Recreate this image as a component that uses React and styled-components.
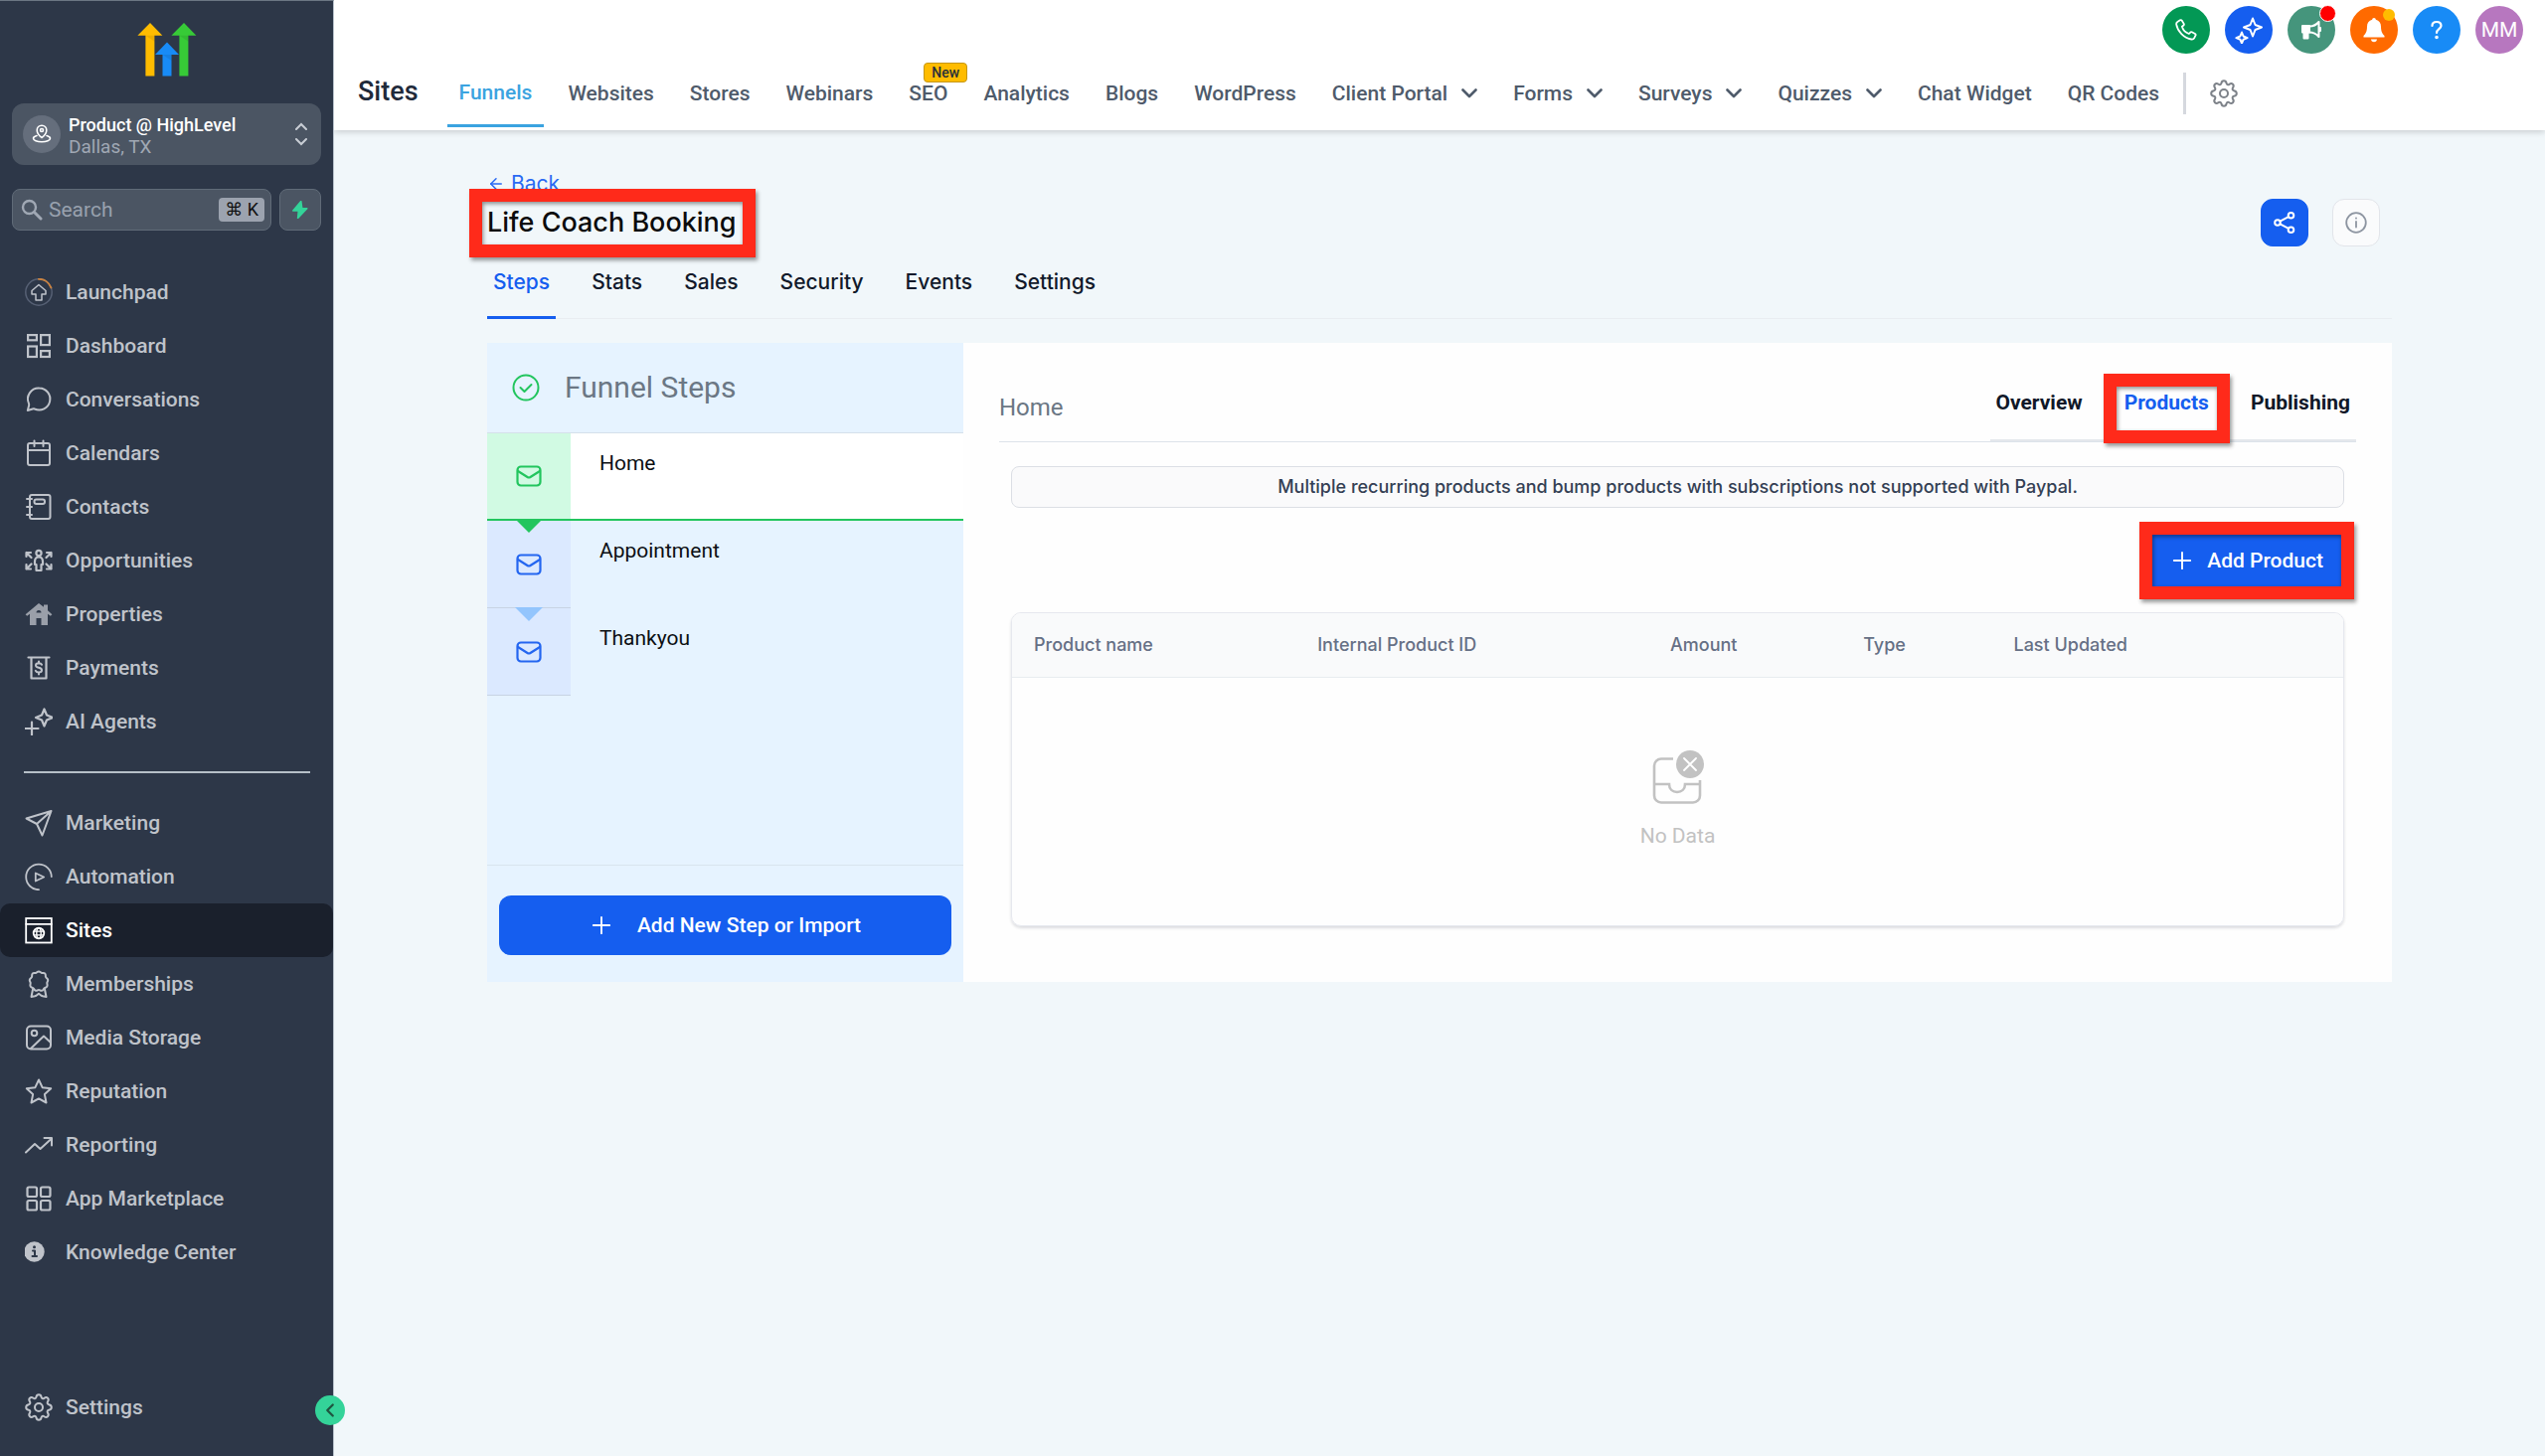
import React from 'react'
import styled, { createGlobalStyle, css } from 'styled-components'
import { ChevronLeft, Plus, ArrowLeft } from 'lucide-react'

const colors = {
  sidebar: '#2d3748',
  sidebarActive: '#1a202c',
  sidebarField: '#4b5563',
  page: '#f1f7fa',
  primary: '#155eef',
  sky: '#3ba3e0',
  green: '#22c55e',
  red: '#ff2a1a',
  grey: '#6b7784',
  line: '#e4e7ec',
}

const roboto = "Roboto, 'DejaVu Sans', sans-serif"
const inter = 'Inter, sans-serif'

const GlobalStyle = createGlobalStyle`
  *, *::before, *::after {
    box-sizing: border-box;
  }
  body {
    margin: 0;
    background: ${colors.page};
    font-family: ${roboto};
    font-size: 21px;
    line-height: 24px;
  }
  button, input {
    font: inherit;
    margin: 0;
    padding: 0;
    border: 0;
    background: none;
    color: inherit;
  }
  button {
    cursor: pointer;
  }
  a {
    color: inherit;
    text-decoration: none;
  }
  h1, h2, h3, p, ul {
    margin: 0;
    padding: 0;
    list-style: none;
  }
  svg {
    display: block;
    flex: none;
  }
`

/* icons */

const Svg = ({ size = 28, width = 1.5, box = 28, children, ...rest }) => (
  <svg
    width={size}
    height={size}
    viewBox={`0 0 ${box} ${box}`}
    fill='none'
    stroke='currentColor'
    strokeWidth={width}
    strokeLinecap='round'
    strokeLinejoin='round'
    aria-hidden='true'
    {...rest}
  >
    {children}
  </svg>
)

const GEAR = 'M14 1.2c1.5 0 2.3 1 2.6 2.5.3 1.4 1.6 1.9 2.8 1.1 1.3-.9 2.6-1 3.6 0s.9 2.3 0 3.6c-.8 1.2-.3 2.5 1.1 2.8 1.5.3 2.7 1.2 2.7 2.8s-1.2 2.5-2.7 2.8c-1.4.3-1.9 1.6-1.1 2.8.9 1.3 1 2.6 0 3.6s-2.3.9-3.6 0c-1.2-.8-2.5-.3-2.8 1.1-.3 1.5-1.1 2.5-2.6 2.5s-2.3-1-2.6-2.5c-.3-1.4-1.6-1.9-2.8-1.1-1.3.9-2.6 1-3.6 0s-.9-2.3 0-3.6c.8-1.2.3-2.5-1.1-2.8C2.4 16.5 1.2 15.6 1.2 14s1.2-2.5 2.7-2.8c1.4-.3 1.9-1.6 1.1-2.8-.9-1.3-1-2.6 0-3.6s2.3-.9 3.6 0c1.2.8 2.5.3 2.8-1.1C11.7 2.2 12.5 1.2 14 1.2z'

const GearIcon = () => (
  <Svg width={2}>
    <path d={GEAR} />
    <circle cx='14' cy='14' r='4' />
  </Svg>
)

const LaunchpadIcon = () => (
  <Svg>
    <circle cx='14' cy='14' r='13.2' stroke='#566074' />
    <path d='M14 .8a13.2 13.2 0 0 1 12.4 8.7' stroke='#c98240' strokeWidth='2' />
    <path d='M14 6.5 7 12.5v3.5h4v6h6v-6h4v-3.5z' />
  </Svg>
)

const DashboardIcon = () => (
  <Svg width={2.2} strokeLinecap='butt' strokeLinejoin='miter'>
    <rect x='3.1' y='3.1' width='8.8' height='5.2' />
    <rect x='16.1' y='3.1' width='8.8' height='10' />
    <rect x='3.1' y='14.5' width='8.8' height='10.5' />
    <rect x='16.1' y='19.1' width='8.8' height='5.9' />
  </Svg>
)

const ChatIcon = () => (
  <Svg width={2}>
    <path d='M14.5 2.5a11 11 0 1 1-4.7 21c-.6-.3-1.2-.2-2 0L2.8 25l1.3-5c.2-.7.1-1.3-.1-1.9A11 11 0 0 1 14.5 2.5z' />
  </Svg>
)

const CalendarIcon = () => (
  <Svg width={2}>
    <rect x='3' y='4' width='22' height='22' rx='2' />
    <path d='M3 11h22M9.5 1.5V7M18.5 1.5V7' />
  </Svg>
)

const ContactsIcon = () => (
  <Svg width={2}>
    <rect x='5' y='2' width='20.5' height='24' rx='2' />
    <rect x='9.5' y='6.5' width='10.5' height='4.5' rx='2' />
    <path d='M2 6h5M2 14h5M2 22h5' />
  </Svg>
)

const OpportunitiesIcon = () => (
  <Svg width={2.2}>
    <circle cx='14' cy='6.5' r='2.6' />
    <path d='M14 10.5c-3 0-4 2-4 4.5v3h1.5v6h5v-6H18v-3c0-2.5-1-4.5-4-4.5z' />
    <path d='M1.5 10V6H6M1.5 6l5 5M26.5 10V6H22m4.5 0-5 5M1.5 18v4.5H6m-4.5 0 5-5M26.5 18v4.5H22m4.5 0-5-5' />
  </Svg>
)

const PropertiesIcon = () => (
  <Svg>
    <path
      fill='currentColor'
      stroke='none'
      opacity='.75'
      d='M14 3 .6 14.2l1.6 1.6L5 13.8V25h6.500v-7h5v7H23V13.8l2.8 2 1.6-1.6L23 10.2V4.5h-4v2.3zm-2.5 9.5a2.5 2.5 0 0 1 5 0z'
    />
  </Svg>
)

const PaymentsIcon = () => (
  <Svg width={2.2}>
    <path d='M3.5 3.5h21M6.5 3.5v21h15v-21' />
    <path d='M17 10.8c-.5-1-1.5-1.5-3-1.5-1.8 0-3 .8-3 2.2 0 3 6 1.5 6 4.7 0 1.5-1.2 2.3-3 2.3-1.6 0-2.7-.6-3.2-1.7M14 7.5v2M14 18.5v2' strokeWidth='2' />
  </Svg>
)

const AgentsIcon = () => (
  <Svg width={2.2}>
    <path d='M19.5 1.5 22 7.5l6 2.5-6 2.5-2.5 6-2.5-6-6-2.500 6-2.5zM7 14.5v13M.5 21h13' />
  </Svg>
)

const SendIcon = () => (
  <Svg width={2}>
    <path d='M26.5 2 1.5 9.5 12 15l5.5 11.5zM26.5 2 12 15' />
  </Svg>
)

const AutomationIcon = () => (
  <Svg width={1.8}>
    <path d='M26.8 14A12.8 12.8 0 1 0 14 27.2' />
    <path d='M10.8 10.5v8l8.4-4z' />
  </Svg>
)

const SitesIcon = () => (
  <Svg width={1.8} strokeLinejoin='miter'>
    <rect x='1.2' y='2' width='25.6' height='24.5' />
    <path d='M1.2 7.8h25.6' />
    <circle cx='14' cy='17' r='5.3' />
    <ellipse cx='14' cy='17' rx='2.2' ry='5.3' strokeWidth='1.4' />
    <path d='M9.5 15.2h9M9.5 18.8h9' strokeWidth='1.2' />
  </Svg>
)

const BadgeIcon = () => (
  <Svg width={2}>
    <path d='M14 1.5c1.5 0 1.8 1.2 3 1.5s2.3-.4 3.3.7.3 2.1.7 3.3 1.9 1.4 2.2 2.9-.9 2-.9 3.2.8 2.2 0 3.5-2 1-2.9 1.9-1 2-2.4 2.3-1.9-.8-3-.8-1.7 1.1-3 .8-1.5-1.4-2.4-2.3-2.1-.6-2.9-1.9 0-2.3 0-3.5-1.2-1.8-.9-3.2S6.6 8.2 7 7s-.3-2.2.7-3.3 2.1-.4 3.3-.7 1.5-1.5 3-1.5z' />
    <path d='M8 19.5 6.5 27l3.5-.8 1.5-.5 2.5-2 2.5 2 1.5.5 3.5.8-1.5-7.5' />
  </Svg>
)

const ImageIcon = () => (
  <Svg width={2}>
    <rect x='2' y='2.5' width='24' height='23' rx='4' />
    <circle cx='9.5' cy='9.5' r='2.8' />
    <path d='M6 25 19 12.5l7 6.5' />
  </Svg>
)

const StarIcon = () => (
  <Svg width={2}>
    <path d='m14 2.5 3.6 7.7 8.6 1.1-6.3 5.8 1.6 8.4L14 21.4l-7.5 4.1 1.6-8.4-6.3-5.8 8.6-1.1z' />
  </Svg>
)

const TrendIcon = () => (
  <Svg width={2}>
    <path d='m1 21.5 9-8.5 5.5 5L27 7.5M19.5 7H27v7.5' />
  </Svg>
)

const GridIcon = () => (
  <Svg width={2.2}>
    <rect x='2.5' y='2.5' width='9.5' height='9.5' rx='1.5' />
    <rect x='16' y='2.5' width='9.5' height='9.5' rx='1.5' />
    <rect x='2.5' y='16' width='9.5' height='9.5' rx='1.5' />
    <rect x='16' y='16' width='9.5' height='9.5' rx='1.5' />
  </Svg>
)

const KnowledgeIcon = () => (
  <Svg>
    <circle cx='9.5' cy='13.5' r='10.2' fill='currentColor' stroke='none' />
    <path d='M8 12.5h2V18M7.5 18H12' stroke={colors.sidebar} strokeWidth='2' />
    <circle cx='9.500' cy='8.8' r='1.5' fill={colors.sidebar} stroke='none' />
  </Svg>
)

const LogoIcon = () => (
  <svg width='60' height='54' viewBox='0 0 60 54' aria-hidden='true'>
    <path fill='#ffbc00' d='M13 0 .4 12.8h8v40.7h9V12.8h8z' />
    <path fill='#37ca37' d='M47 0 34.4 12.8h8v40.7h9V12.8h8z' />
    <path fill='#188bf6' d='M30 19.5 18 32h7.5v21.5h9V32H42z' />
    <path fill='#000' opacity='.08' d='M8.4 12.8h9v6zM25.5 32h9v6zM42.4 12.8h9v6z' />
  </svg>
)

const LocationIcon = () => (
  <Svg size={20} box={20} width={1.6}>
    <path d='M10 13.5s-4.8-3.4-4.8-7.500a4.8 4.8 0 0 1 9.6 0c0 4.1-4.8 7.5-4.8 7.5z' />
    <circle cx='10' cy='6' r='1.5' />
    <path d='M5 11.5c-2.2.6-3.5 1.5-3.5 2.7 0 2 3.8 3.5 8.5 3.5s8.5-1.5 8.5-3.5c0-1.2-1.3-2.1-3.5-2.7' />
  </Svg>
)

const SearchIcon = () => (
  <Svg size={22} box={22} width={2.4}>
    <circle cx='8.5' cy='8.5' r='6.5' />
    <path d='m14 14 6 6' strokeWidth='3' />
  </Svg>
)

const BoltIcon = () => (
  <Svg size={18} box={18}>
    <path d='M9.8.6 1.8 10h5.5l-.7 7.4 9.200-9.600h-5z' fill='#34d399' stroke='#34d399' />
  </Svg>
)

const PhoneIcon = () => (
  <Svg size={22} box={22} width={1.8}>
    <path d='M2.6 2.8 5 1.3c.7-.4 1.4-.1 1.8.5l1.9 3.1c.3.6.2 1.2-.3 1.6L6.9 7.7c.9 3.1 3.9 6.2 7 7.3l1.3-1.4c.4-.5 1-.6 1.6-.3l3.2 1.7c.6.4.8 1.1.5 1.7l-1.3 2.5c-.6 1-1.7 1.5-2.9 1.3C8.7 19.300 2.3 12.3 1.2 5.7c-.2-1.2.3-2.3 1.4-2.9z' />
  </Svg>
)

const SparklesIcon = () => (
  <Svg width={2}>
    <path d='M18 2.5 20.5 9l6.500 2.5-6.5 2.5-2.5 6.5-2.5-6.5L9 11.5 15.5 9zM7 16.5l1.6 4 4 1.6-4 1.6L7 27.5l-1.6-3.8-4-1.6 4-1.6z' />
  </Svg>
)

const MegaphoneIcon = () => (
  <Svg size={22} box={22} width={2}>
    <path d='M2 7h7v6.5H2z' fill='currentColor' />
    <path d='M3.5 13.5v6h4v-6' fill='currentColor' />
    <path d='M9 7.5c4 0 7-1.5 9.5-4.5v15C16 15 13 13.5 9 13.5M20 9v3' />
  </Svg>
)

const BellIcon = () => (
  <Svg size={26} box={26}>
    <path
      d='M13 1c-1 0-1.8.8-1.8 1.8C7.8 3.6 6 6.3 6 9.8 6 15 4.5 17 2.5 19v1.5h21V19C21.5 17 20 15 20 9.8c0-3.5-1.8-6.2-5.2-7C14.8 1.8 14 1 13 1zM10 22.5h6c0 1.6-1.3 2.7-3 2.7s-3-1.1-3-2.7z'
      fill='currentColor'
      stroke='none'
    />
  </Svg>
)

const HelpIcon = () => (
  <Svg size={20} box={20} width={2.2}>
    <path d='M5.5 6C5.5 3.5 7.5 2 10 2s4.5 1.5 4.5 4c0 3-4.5 3.5-4.5 7' />
    <circle cx='10' cy='17.5' r='.7' fill='currentColor' />
  </Svg>
)

const ShareIcon = () => (
  <Svg size={22} box={22} width={2}>
    <circle cx='17.5' cy='3.8' r='2.8' />
    <circle cx='4' cy='11' r='2.8' />
    <circle cx='17.5' cy='18.2' r='2.8' />
    <path d='m6.5 9.7 8.5-4.5M6.5 12.3l8.5 4.500' />
  </Svg>
)

const InfoIcon = () => (
  <Svg size={22} box={22} width={1.8}>
    <circle cx='11' cy='11' r='9.8' />
    <path d='M11 10v5.5M11 6.5v.2' />
  </Svg>
)

const CheckIcon = () => (
  <Svg width={2}>
    <circle cx='14' cy='14' r='12.5' />
    <path d='m8.5 14 4 4 7-7' />
  </Svg>
)

const MailIcon = () => (
  <Svg size={26} box={26} width={2.2}>
    <rect x='1.5' y='3.5' width='23' height='19' rx='3.5' />
    <path d='m2 8 9.5 6c1 .6 2 .6 3 0L24 8' />
  </Svg>
)

const Caret = ({ up }) => (
  <svg width='12' height='8' viewBox='0 0 12 8' fill='none' stroke='currentColor' strokeWidth='2' aria-hidden='true'>
    <path d={up ? 'm1 7 5-5 5 5' : 'm1 1 5 5 5-5'} strokeLinecap='round' />
  </svg>
)

const MenuCaret = () => (
  <Svg size={16} box={16} width={2.6}>
    <path d='m1.5 4.5 6.5 6.5 6.5-6.5' />
  </Svg>
)

const EmptyIcon = () => (
  <svg width='52' height='54' viewBox='0 0 52 54' fill='none' stroke='#c2c2c2' strokeWidth='2.6' aria-hidden='true'>
    <path d='M21 8.5H9a7 7 0 0 0-7 7v30a7 7 0 0 0 7 7h32a7 7 0 0 0 7-7V30M2 34h15c0 5 3.5 8 8 8s8-3 8-8h15' />
    <circle cx='38' cy='14' r='14' fill='#c2c2c2' stroke='none' />
    <path d='m32 8 12 12M44 8 32 20' stroke='#fff' strokeWidth='1.8' strokeLinecap='round' />
  </svg>
)

/* shared */

// call-out frame drawn over the wrapped element
const Marked = styled.div`
  position: relative;
  display: inline-flex;
  &::after {
    content: '';
    position: absolute;
    inset: ${p => p.$inset};
    border: 13px solid ${colors.red};
    box-shadow: 2px 3px 4px rgba(0, 0, 0, 0.4), inset 1px 2px 4px rgba(0, 0, 0, 0.45);
    pointer-events: none;
  }
`

const Shell = styled.div`
  display: flex;
  min-height: 100vh;
`

/* sidebar */

const Sidebar = styled.aside`
  position: relative;
  display: flex;
  flex-direction: column;
  flex: none;
  width: 336px;
  padding: 22px 0;
  background: ${colors.sidebar};
  border-top: 1px solid #6b7683;
  border-right: 1px solid #b8c2cc;
`

const Logo = styled.a`
  align-self: center;
  margin-bottom: 27px;
`

const Account = styled.button`
  display: flex;
  align-items: center;
  gap: 8px;
  height: 62px;
  margin: 0 12px 24px;
  padding: 0 14px 0 11px;
  border-radius: 12px;
  background: ${colors.sidebarField};
  color: #fff;
  text-align: left;
`

const AccountAvatar = styled.span`
  display: grid;
  place-items: center;
  width: 38px;
  height: 38px;
  border-radius: 50%;
  background: #656e7c;
`

const AccountText = styled.span`
  display: flex;
  flex: 1;
  flex-direction: column;
  padding-top: 4px;
  font-size: 18px;
  font-weight: 500;
  line-height: 22px;
  small {
    color: #a0a8b4;
    font-size: 19px;
    font-weight: 400;
  }
`

const Arrows = styled.span`
  display: flex;
  flex-direction: column;
  gap: 8px;
  color: #c8cdd4;
`

const SearchRow = styled.div`
  display: flex;
  gap: 8px;
  margin: 0 12px 35px;
`

const fieldBox = css`
  height: 42px;
  border: 1px solid #606b78;
  border-radius: 8px;
  background: ${colors.sidebarField};
`

const SearchBox = styled.label`
  ${fieldBox}
  display: flex;
  flex: 1;
  align-items: center;
  gap: 6px;
  min-width: 0;
  padding: 0 6px 0 8px;
  color: #a0a8b4;
  input {
    flex: 1;
    min-width: 0;
    outline: none;
    &::placeholder {
      color: #98a1ae;
      opacity: 1;
    }
  }
  kbd {
    padding: 0 6px;
    border-radius: 4px;
    background: #9ca3af;
    color: #111;
    font-family: ${roboto};
    font-size: 18px;
    line-height: 24px;
  }
`

const BoltButton = styled.button`
  ${fieldBox}
  display: grid;
  place-items: center;
  width: 42px;
`

const NavLink = styled.a`
  display: flex;
  align-items: center;
  gap: 13px;
  height: 54px;
  padding-left: 25px;
  border-radius: 10px;
  background: ${p => (p.$active ? colors.sidebarActive : 'transparent')};
  color: ${p => (p.$active ? '#fff' : '#bfc3ca')};
  font-weight: 500;
`

const Separator = styled.hr`
  width: 288px;
  height: 2px;
  margin: 23px 0 23px 24px;
  border: 0;
  background: #b6bfc8;
`

const SidebarFooter = styled.div`
  margin-top: auto;
`

const Collapse = styled.button`
  position: absolute;
  right: -12px;
  bottom: 31px;
  display: grid;
  place-items: center;
  width: 30px;
  height: 30px;
  border-radius: 50%;
  background: #34d399;
  color: #1f5540;
`

/* header */

const Content = styled.div`
  flex: 1;
  min-width: 0;
`

const Header = styled.header`
  height: 131px;
  background: #fff;
  box-shadow: 0 2px 6px rgba(0, 0, 0, 0.16);
`

const Actions = styled.div`
  display: flex;
  justify-content: flex-end;
  gap: 15px;
  padding: 6px 22px;
`

const Round = styled.button`
  position: relative;
  display: grid;
  place-items: center;
  width: 48px;
  height: 48px;
  border-radius: 50%;
  background: ${p => p.$bg};
  color: #fff;
`

const Dot = styled.i`
  position: absolute;
  top: ${p => (p.$ring ? '-1px' : '3px')};
  right: ${p => (p.$ring ? '-1px' : '3px')};
  width: ${p => (p.$ring ? '17px' : '12px')};
  height: ${p => (p.$ring ? '17px' : '12px')};
  border: ${p => (p.$ring ? '1px solid #fff' : '0')};
  border-radius: 50%;
  background: ${p => p.$bg};
`

const TopNav = styled.nav`
  display: flex;
  align-items: center;
  gap: 12px;
  height: 68px;
  padding-left: 24px;
`

const Section = styled.h1`
  margin-right: 17px;
  padding-bottom: 4px;
  color: #1f2a3a;
  font-size: 27px;
  font-weight: 500;
  line-height: 32px;
`

const TopLink = styled.a`
  position: relative;
  display: flex;
  align-items: center;
  gap: 14px;
  height: 68px;
  padding: 0 12px;
  border-bottom: ${p => (p.$active ? `3px solid ${colors.sky}` : '0')};
  color: ${p => (p.$active ? colors.sky : '#4f5b6b')};
  font-weight: 500;
  white-space: nowrap;
`

const NewTag = styled.span`
  position: absolute;
  top: 3px;
  left: 27px;
  padding: 0 7px;
  border: 1px solid #c69712;
  border-radius: 4px;
  background: #ffbc00;
  color: #26303b;
  font-size: 14px;
  line-height: 18px;
`

const Divider = styled.span`
  width: 3px;
  height: 42px;
  margin-right: 12px;
  background: #d5d8de;
`

const GearButton = styled.button`
  color: #7d8289;
`

/* funnel page */

const Page = styled.main`
  padding: 41px 154px;
`

const Back = styled.a`
  display: flex;
  align-items: center;
  gap: 6px;
  width: fit-content;
  height: 24px;
  padding-top: 2px;
  color: #2a6af3;
  font-family: ${inter};
`

const TitleRow = styled.div`
  display: flex;
  align-items: center;
  justify-content: space-between;
  height: 56px;
  padding-right: 12px;
`

const Title = styled.h2`
  color: #0b0b0c;
  font-family: ${inter};
  font-size: 27px;
  font-weight: 500;
  line-height: 36px;
`

const Tools = styled.div`
  display: flex;
  gap: 24px;
`

const Tool = styled.button`
  display: grid;
  place-items: center;
  width: 48px;
  height: 48px;
  border: 1px solid ${p => (p.$primary ? colors.primary : '#e2e5ea')};
  border-radius: 12px;
  background: ${p => (p.$primary ? colors.primary : '#fafbfc')};
  color: ${p => (p.$primary ? '#fff' : '#8d95a1')};
`

const Tabs = styled.nav`
  display: flex;
  gap: 30px;
  border-bottom: 1px solid #e9edf1;
`

const Tab = styled.a`
  margin-bottom: -1px;
  padding: 20px 6px 22px;
  border-bottom: 3px solid ${p => (p.$active ? colors.primary : 'transparent')};
  color: ${p => (p.$active ? colors.primary : '#111a2b')};
  font-family: ${inter};
  font-weight: 500;
`

const Board = styled.div`
  display: grid;
  grid-template-columns: 1fr 3fr;
  min-height: 643px;
  margin-top: 24px;
`

const Steps = styled.section`
  display: flex;
  flex-direction: column;
  background: #e6f3ff;
`

const StepsHead = styled.div`
  display: flex;
  align-items: center;
  gap: 25px;
  height: 91px;
  padding-left: 25px;
  border-bottom: 1px solid #d5e0ea;
  color: ${colors.green};
  h3 {
    color: ${colors.grey};
    font-size: 30px;
    font-weight: 400;
    line-height: 36px;
  }
`

const StepRow = styled.li`
  display: flex;
  height: 88px;
  background: ${p => (p.$active ? '#fff' : 'transparent')};
  border-bottom: ${p => (p.$active ? `2px solid ${colors.green}` : '0')};
`

const StepIcon = styled.span`
  position: relative;
  display: grid;
  place-items: center;
  width: 84px;
  background: ${p => (p.$active ? '#d1fae3' : '#dbe9ff')};
  border-bottom: ${p => (p.$active ? '0' : '1px solid #c7d3e3')};
  color: ${p => (p.$active ? colors.green : '#2466f0')};
`

const Pointer = styled.i`
  position: absolute;
  top: 100%;
  left: 50%;
  z-index: 1;
  margin-left: -14px;
  border: 14px solid transparent;
  border-top-color: ${p => (p.$active ? colors.green : '#93c5fd')};
  border-bottom: 0;
`

const StepName = styled.a`
  padding: 18px 29px;
  color: #0c0f13;
`

const StepsFoot = styled.div`
  margin-top: auto;
  padding: 30px 12px 27px;
  border-top: 1px solid #d9e4ee;
`

const PrimaryButton = styled.button`
  display: flex;
  align-items: center;
  justify-content: center;
  gap: ${p => (p.$wide ? '22px' : '11px')};
  width: ${p => (p.$wide ? '100%' : 'auto')};
  height: ${p => (p.$wide ? '60px' : '52px')};
  padding: 0 18px 0 16px;
  border-radius: ${p => (p.$wide ? '12px' : '0')};
  background: ${colors.primary};
  color: #fff;
  font-weight: 500;
`

const Detail = styled.section`
  padding: 0 36px;
  background: #fefefe;
`

const DetailHead = styled.div`
  display: flex;
  align-items: flex-end;
  justify-content: space-between;
  height: 100px;
  border-bottom: 1px solid #dde3ea;
  h3 {
    padding-bottom: 20px;
    color: ${colors.grey};
    font-size: 24px;
    font-weight: 400;
    line-height: 28px;
  }
`

const DetailTabs = styled.nav`
  display: flex;
  gap: 42px;
  padding: 0 6px 25px;
  border-bottom: 2px solid ${colors.line};
  color: #101828;
  font-weight: 700;
`

const DetailTab = styled.a`
  color: ${p => (p.$active ? colors.primary : 'inherit')};
`

const Products = styled.div`
  display: flex;
  flex-direction: column;
  padding: 24px 12px 0;
`

const Notice = styled.p`
  padding: 8px 16px;
  border: 1px solid #dcdfe5;
  border-radius: 8px;
  background: #fafafb;
  color: #344054;
  font-family: ${inter};
  font-size: 18px;
  font-weight: 500;
  text-align: center;
`

const Toolbar = styled.div`
  display: flex;
  justify-content: flex-end;
  padding: 27px 3px 26px;
`

const TableCard = styled.div`
  overflow: hidden;
  border: 1px solid #e6e8ee;
  border-radius: 10px;
  box-shadow: 0 2px 3px rgba(16, 24, 40, 0.14);
`

const Table = styled.table`
  width: 100%;
  border-collapse: collapse;
  table-layout: fixed;
  th {
    height: 64px;
    padding: 0 0 0 22px;
    border-bottom: 1px solid #e8ecf0;
    background: #f9fafb;
    color: #667085;
    font-family: ${inter};
    font-size: 18px;
    font-weight: 500;
    text-align: left;
  }
  td {
    height: 250px;
    padding: 0 0 4px;
  }
`

const Empty = styled.div`
  display: flex;
  flex-direction: column;
  align-items: center;
  gap: 20px;
  color: #c2c2c2;
`

const mainLinks = [
  ['Launchpad', LaunchpadIcon],
  ['Dashboard', DashboardIcon],
  ['Conversations', ChatIcon],
  ['Calendars', CalendarIcon],
  ['Contacts', ContactsIcon],
  ['Opportunities', OpportunitiesIcon],
  ['Properties', PropertiesIcon],
  ['Payments', PaymentsIcon],
  ['AI Agents', AgentsIcon],
]

const moreLinks = [
  ['Marketing', SendIcon],
  ['Automation', AutomationIcon],
  ['Sites', SitesIcon],
  ['Memberships', BadgeIcon],
  ['Media Storage', ImageIcon],
  ['Reputation', StarIcon],
  ['Reporting', TrendIcon],
  ['App Marketplace', GridIcon],
  ['Knowledge Center', KnowledgeIcon],
]

const topLinks = [
  { label: 'Funnels' },
  { label: 'Websites' },
  { label: 'Stores' },
  { label: 'Webinars' },
  { label: 'SEO', isNew: true },
  { label: 'Analytics' },
  { label: 'Blogs' },
  { label: 'WordPress' },
  { label: 'Client Portal', menu: true },
  { label: 'Forms', menu: true },
  { label: 'Surveys', menu: true },
  { label: 'Quizzes', menu: true },
  { label: 'Chat Widget' },
  { label: 'QR Codes' },
]

const columns = [
  ['Product name', '21.3%'],
  ['Internal Product ID', '26.5%'],
  ['Amount', '14.5%'],
  ['Type', '11.3%'],
  ['Last Updated', 'auto'],
]

const SideLink = ({ label, icon: Icon, active }) => (
  <NavLink href='#' $active={active}>
    <Icon />
    {label}
  </NavLink>
)

const SideMenu = () => (
  <Sidebar>
    <Logo href='#' aria-label='HighLevel'>
      <LogoIcon />
    </Logo>
    <Account>
      <AccountAvatar><LocationIcon /></AccountAvatar>
      <AccountText>
        Product @ HighLevel
        <small>Dallas, TX</small>
      </AccountText>
      <Arrows>
        <Caret up />
        <Caret />
      </Arrows>
    </Account>
    <SearchRow>
      <SearchBox>
        <SearchIcon />
        <input type='text' placeholder='Search' aria-label='Search' />
        <kbd>⌘ K</kbd>
      </SearchBox>
      <BoltButton aria-label='Quick actions'><BoltIcon /></BoltButton>
    </SearchRow>
    <nav>
      {mainLinks.map(([label, icon]) => <SideLink key={label} label={label} icon={icon} />)}
      <Separator />
      {moreLinks.map(([label, icon]) => (
        <SideLink key={label} label={label} icon={icon} active={label === 'Sites'} />
      ))}
    </nav>
    <SidebarFooter>
      <SideLink label='Settings' icon={GearIcon} />
    </SidebarFooter>
    <Collapse aria-label='Collapse sidebar'><ChevronLeft size={22} strokeWidth={2.5} /></Collapse>
  </Sidebar>
)

const TopBar = () => (
  <Header>
    <Actions>
      <Round $bg='#039855' aria-label='Call'><PhoneIcon /></Round>
      <Round $bg='#155eef' aria-label='Assistant'><SparklesIcon /></Round>
      <Round $bg='#45957c' aria-label='Announcements'>
        <MegaphoneIcon />
        <Dot $bg='#ff0000' $ring />
      </Round>
      <Round $bg='#ff6a00' aria-label='Notifications'>
        <BellIcon />
        <Dot $bg='#ffbc00' />
      </Round>
      <Round $bg='#188bf6' aria-label='Help'><HelpIcon /></Round>
      <Round $bg='#b777bf'>MM</Round>
    </Actions>
    <TopNav>
      <Section>Sites</Section>
      {topLinks.map(({ label, menu, isNew }) => (
        <TopLink key={label} href='#' $active={label === 'Funnels'}>
          {label}
          {menu && <MenuCaret />}
          {isNew && <NewTag>New</NewTag>}
        </TopLink>
      ))}
      <Divider />
      <GearButton aria-label='Site settings'><GearIcon /></GearButton>
    </TopNav>
  </Header>
)

const FunnelSteps = () => (
  <Steps>
    <StepsHead>
      <CheckIcon />
      <h3>Funnel Steps</h3>
    </StepsHead>
    <ul>
      {['Home', 'Appointment', 'Thankyou'].map((name, i) => (
        <StepRow key={name} $active={i === 0}>
          <StepIcon $active={i === 0}>
            <MailIcon />
            {i < 2 && <Pointer $active={i === 0} />}
          </StepIcon>
          <StepName href='#'>{name}</StepName>
        </StepRow>
      ))}
    </ul>
    <StepsFoot>
      <PrimaryButton $wide>
        <Plus size={28} strokeWidth={1.6} />
        Add New Step or Import
      </PrimaryButton>
    </StepsFoot>
  </Steps>
)

const StepDetail = () => (
  <Detail>
    <DetailHead>
      <h3>Home</h3>
      <DetailTabs>
        <DetailTab href='#'>Overview</DetailTab>
        <Marked $inset='-17px -21px -29px'>
          <DetailTab href='#' $active>Products</DetailTab>
        </Marked>
        <DetailTab href='#'>Publishing</DetailTab>
      </DetailTabs>
    </DetailHead>
    <Products>
      <Notice>Multiple recurring products and bump products with subscriptions not supported with Paypal.</Notice>
      <Toolbar>
        <Marked $inset='-13px'>
          <PrimaryButton>
            <Plus size={28} strokeWidth={1.6} />
            Add Product
          </PrimaryButton>
        </Marked>
      </Toolbar>
      <TableCard>
        <Table>
          <colgroup>
            {columns.map(([label, width]) => <col key={label} width={width} />)}
          </colgroup>
          <thead>
            <tr>
              {columns.map(([label]) => <th key={label} scope='col'>{label}</th>)}
            </tr>
          </thead>
          <tbody>
            <tr>
              <td colSpan={columns.length}>
                <Empty>
                  <EmptyIcon />
                  No Data
                </Empty>
              </td>
            </tr>
          </tbody>
        </Table>
      </TableCard>
    </Products>
  </Detail>
)

const App = () => (
  <Shell>
    <GlobalStyle />
    <SideMenu />
    <Content>
      <TopBar />
      <Page>
        <Back href='#'><ArrowLeft size={18} strokeWidth={2} />Back</Back>
        <TitleRow>
          <Marked $inset='-16px -19px -17px -18px'>
            <Title>Life Coach Booking</Title>
          </Marked>
          <Tools>
            <Tool $primary aria-label='Share'><ShareIcon /></Tool>
            <Tool aria-label='Info'><InfoIcon /></Tool>
          </Tools>
        </TitleRow>
        <Tabs>
          {['Steps', 'Stats', 'Sales', 'Security', 'Events', 'Settings'].map(name => (
            <Tab key={name} href='#' $active={name === 'Steps'}>{name}</Tab>
          ))}
        </Tabs>
        <Board>
          <FunnelSteps />
          <StepDetail />
        </Board>
      </Page>
    </Content>
  </Shell>
)

export default App
